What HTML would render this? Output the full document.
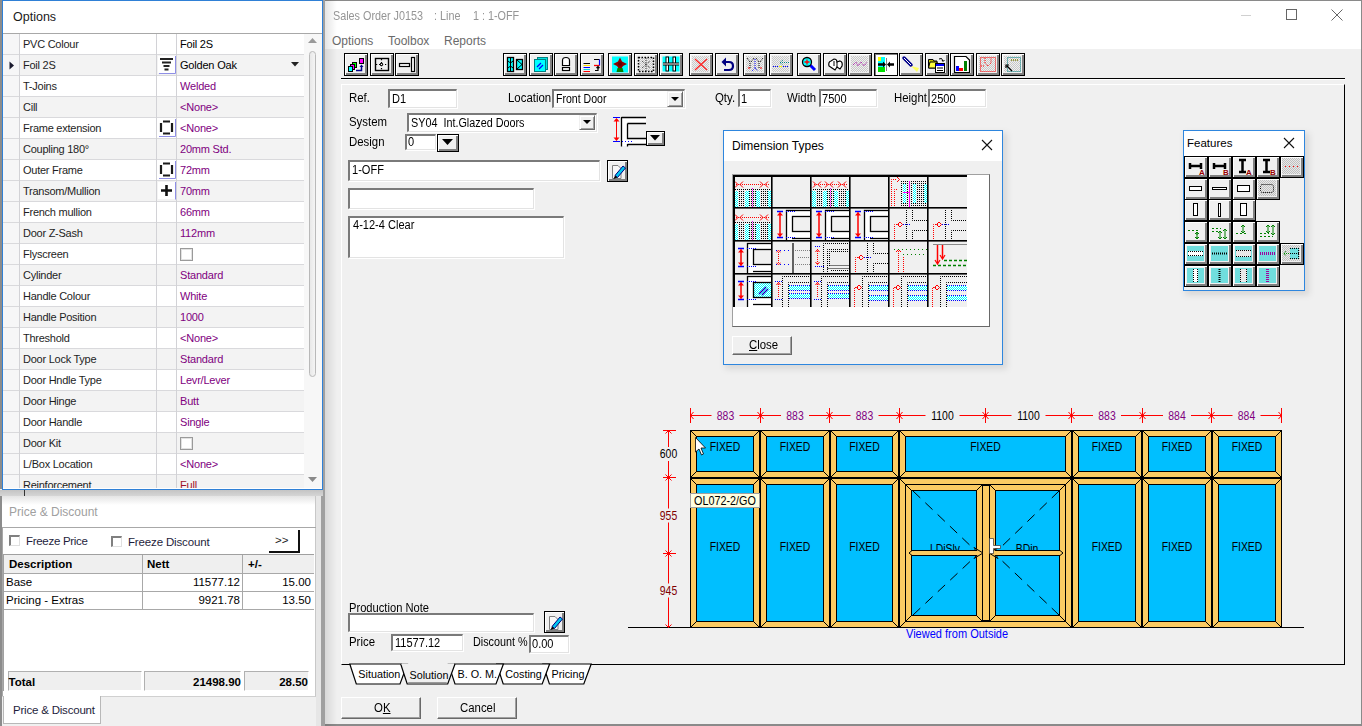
<!DOCTYPE html>
<html><head><meta charset="utf-8">
<style>
*{margin:0;padding:0;box-sizing:border-box}
html,body{width:1362px;height:726px;overflow:hidden;background:#f0f0f0;font-family:"Liberation Sans",sans-serif;font-size:11px;color:#000}
.a{position:absolute}
.t{position:absolute;white-space:nowrap;line-height:1}
.fld{position:absolute;background:#fff;border-top:2px solid #7a7a7a;border-left:2px solid #7a7a7a;border-bottom:1px solid #e3e3e3;border-right:1px solid #e3e3e3;box-shadow:1px 1px 0 #fff}
.ms{font-size:11.5px}
.tb{position:absolute;top:53px;width:24px;height:23px;border:1px solid #000;background:#f0f0f0;box-shadow:inset 1px 1px #fff,inset -2px -2px #808080}
.fb{position:absolute;width:24px;height:22px;border:1px solid #000;background:#f0f0f0;box-shadow:inset 1px 1px #fff,inset -2px -2px #808080}
.btn{position:absolute;background:#f0f0f0;border:1px solid;border-color:#fff #696969 #696969 #fff;box-shadow:inset -1px -1px #a0a0a0}
.dd{position:absolute;background:#f0f0f0;border:1px solid;border-color:#f0f0f0 #696969 #696969 #f0f0f0;box-shadow:inset 1px 1px #fff,inset -1px -1px #a0a0a0}
.arr{position:absolute;width:0;height:0;border-left:4px solid transparent;border-right:4px solid transparent;border-top:4px solid #000}
</style></head><body>
<div class="a" style="left:323px;top:0;width:1039px;height:726px;background:#f0f0f0"></div>
<div class="a" style="left:323px;top:0;width:1039px;height:49px;background:#fff"></div>
<div class="a" style="left:323px;top:0;width:1039px;height:1px;background:#8a8a8a"></div>
<div class="a" style="left:1361px;top:0;width:1px;height:726px;background:#8a8a8a"></div>
<div class="a" style="left:323px;top:724px;width:1039px;height:2px;background:#8a8a8a"></div>
<div class="a" style="left:323px;top:0;width:2px;height:726px;background:#a0a0a0"></div>
<div class="a" style="left:325px;top:0;width:12px;height:726px;background:linear-gradient(90deg,rgba(0,0,0,0.10),rgba(0,0,0,0))"></div>
<div class="t" style="left:333px;top:10px;font-size:12px;color:#959595;transform:scaleX(0.9);transform-origin:0 0">Sales Order J0153</div>
<div class="t" style="left:434px;top:10px;font-size:12px;color:#959595;transform:scaleX(0.9);transform-origin:0 0">: Line</div>
<div class="t" style="left:472.5px;top:10px;font-size:12px;color:#959595;transform:scaleX(0.9);transform-origin:0 0">1 : 1-OFF</div>
<div class="t" style="left:332px;top:35px;font-size:12px;color:#6a6a6a">Options</div>
<div class="t" style="left:388px;top:35px;font-size:12px;color:#6a6a6a">Toolbox</div>
<div class="t" style="left:444px;top:35px;font-size:12px;color:#6a6a6a">Reports</div>
<div class="a" style="left:1241px;top:15px;width:10px;height:1px;background:#d0d0d0"></div>
<div class="a" style="left:1286px;top:9px;width:11px;height:11px;border:1px solid #666"></div>
<svg class="a" style="left:1331px;top:9px" width="12" height="12"><path d="M0.5 0.5L11.5 11.5M11.5 0.5L0.5 11.5" stroke="#666" stroke-width="1"/></svg>
<div class="a" style="left:341px;top:78px;width:1004px;height:1px;background:#000"></div>
<div class="a" style="left:341px;top:79px;width:1004px;height:1px;background:#fff"></div>
<div class="a" style="left:341px;top:84px;width:1004px;height:581px;border-top:1px solid #fff;border-left:1px solid #fff;border-right:1px solid #000;border-bottom:1px solid #000"></div>
<div class="t" style="left:348.5px;top:92.34px;font-size:12px;color:#000;transform:scaleX(0.95);transform-origin:0 0">Ref.</div>
<div class="fld" style="left:388px;top:89px;width:69px;height:19px"></div><div class="t" style="left:392px;top:92.84px;font-size:12px;color:#000;transform:scaleX(0.92);transform-origin:0 0">D1</div>
<div class="t" style="left:507.5px;top:92.34px;font-size:12px;color:#000;transform:scaleX(0.95);transform-origin:0 0">Location</div>
<div class="fld" style="left:552px;top:89px;width:133px;height:19px"></div><div class="t" style="left:555.5px;top:92.84px;font-size:12px;color:#000;transform:scaleX(0.88);transform-origin:0 0">Front Door</div>
<div class="dd" style="left:667px;top:91px;width:16px;height:16px"></div><div class="arr" style="left:671px;top:97px"></div>
<div class="t" style="left:715px;top:92.34px;font-size:12px;color:#000;transform:scaleX(0.95);transform-origin:0 0">Qty.</div>
<div class="fld" style="left:738px;top:89px;width:33px;height:18px"></div><div class="t" style="left:741px;top:92.84px;font-size:12px;color:#000;transform:scaleX(0.92);transform-origin:0 0">1</div>
<div class="t" style="left:787px;top:92.34px;font-size:12px;color:#000;transform:scaleX(0.95);transform-origin:0 0">Width</div>
<div class="fld" style="left:819px;top:89px;width:58px;height:18px"></div><div class="t" style="left:822px;top:92.84px;font-size:12px;color:#000;transform:scaleX(0.92);transform-origin:0 0">7500</div>
<div class="t" style="left:894px;top:92.34px;font-size:12px;color:#000;transform:scaleX(0.95);transform-origin:0 0">Height</div>
<div class="fld" style="left:928px;top:89px;width:58px;height:18px"></div><div class="t" style="left:931px;top:92.84px;font-size:12px;color:#000;transform:scaleX(0.92);transform-origin:0 0">2500</div>
<div class="t" style="left:348.5px;top:116.34px;font-size:12px;color:#000;transform:scaleX(0.95);transform-origin:0 0">System</div>
<div class="fld" style="left:407px;top:113px;width:190px;height:19px"></div><div class="t" style="left:411px;top:116.84px;font-size:12px;color:#000;transform:scaleX(0.9);transform-origin:0 0">SY04&nbsp; Int.Glazed Doors</div>
<div class="dd" style="left:579px;top:115px;width:16px;height:15px"></div><div class="arr" style="left:583px;top:120px"></div>
<div class="t" style="left:348.5px;top:136.34px;font-size:12px;color:#000;transform:scaleX(0.95);transform-origin:0 0">Design</div>
<div class="fld" style="left:405px;top:134px;width:31px;height:16px"></div><div class="t" style="left:408px;top:135.84px;font-size:12px;color:#000;transform:scaleX(0.92);transform-origin:0 0">0</div>
<div class="a" style="left:437px;top:134px;width:22px;height:18px;border:1px solid #000;background:#f0f0f0;box-shadow:inset 1px 1px #fff,inset -2px -2px #808080"></div>
<svg class="a" style="left:442px;top:139px" width="12" height="7"><path d="M0 0H11L5.5 6Z" fill="#000"/></svg>
<svg class="a" style="left:611px;top:115px" width="56" height="33"><path d="M11 3H35V31H11Z" fill="#fff"/><path d="M17 9H35V23H17Z" fill="#f0f0f0"/><path d="M2 2.5H9M2 26.5H9" stroke="#0000ff" stroke-width="1.2"/><path d="M5.5 5V24" stroke="#ff0000" stroke-width="1"/><path d="M2.5 6.5L5.5 3L8.5 6.5ZM2.5 22.5L5.5 26L8.5 22.5Z" fill="#ff0000"/><path d="M10.5 2V31.5M10.5 2.5H35M16.5 8.5V23.5H35M16.5 8.5H35M16.5 29.5H35M16.5 29V31.5" stroke="#000" fill="none" stroke-width="1.3"/><path d="M11 26.5H22" stroke="#0000ff" stroke-width="1.2" stroke-dasharray="1 2"/></svg>
<div class="a" style="left:646px;top:131px;width:19px;height:15px;border:1px solid #000;background:#f0f0f0;box-shadow:inset 1px 1px #fff,inset -2px -2px #808080"></div>
<svg class="a" style="left:650px;top:135px" width="11" height="6"><path d="M0 0H10L5 5.5Z" fill="#000"/></svg>
<div class="fld" style="left:348px;top:160px;width:252px;height:21px"></div><div class="t" style="left:351.5px;top:163.84px;font-size:12px;color:#000;transform:scaleX(0.92);transform-origin:0 0">1-OFF</div>
<div class="a" style="left:607px;top:160px;width:21px;height:22px;border:1px solid #000;background:#f0f0f0;box-shadow:inset 1px 1px #fff,inset -2px -2px #808080"></div><svg class="a" style="left:608px;top:161px" width="19" height="19"><path d="M4.5 4.5H10L13 7.5V17.5H4.5Z" fill="#f8f8f8" stroke="#808080" stroke-width="1"/><path d="M7 14.5L15 5L17.5 7L9.5 16.5Z" fill="#00c8f0" stroke="#000080" stroke-width="1"/><path d="M7 14.5L5.5 18L9.5 16.5Z" fill="#000"/></svg>
<div class="fld" style="left:348px;top:188px;width:186px;height:21px"></div>
<div class="fld" style="left:348px;top:216px;width:216px;height:42px"></div><div class="t" style="left:352.5px;top:218.84px;font-size:12px;color:#000;transform:scaleX(0.92);transform-origin:0 0">4-12-4 Clear</div>
<div class="t" style="left:348.5px;top:601.84px;font-size:12px;color:#000;transform:scaleX(0.93);transform-origin:0 0">Production Note</div>
<div class="fld" style="left:348px;top:613px;width:186px;height:19px"></div>
<div class="a" style="left:544px;top:611px;width:21px;height:22px;border:1px solid #000;background:#f0f0f0;box-shadow:inset 1px 1px #fff,inset -2px -2px #808080"></div><svg class="a" style="left:545px;top:612px" width="19" height="19"><path d="M4.5 4.5H10L13 7.5V17.5H4.5Z" fill="#f8f8f8" stroke="#808080" stroke-width="1"/><path d="M7 14.5L15 5L17.5 7L9.5 16.5Z" fill="#00c8f0" stroke="#000080" stroke-width="1"/><path d="M7 14.5L5.5 18L9.5 16.5Z" fill="#000"/></svg>
<div class="t" style="left:348.5px;top:636.34px;font-size:12px;color:#000;transform:scaleX(0.95);transform-origin:0 0">Price</div>
<div class="fld" style="left:391px;top:634px;width:72px;height:17px"></div><div class="t" style="left:395px;top:636.84px;font-size:12px;color:#000;transform:scaleX(0.92);transform-origin:0 0">11577.12</div>
<div class="t" style="left:472.5px;top:636.34px;font-size:12px;color:#000;transform:scaleX(0.9);transform-origin:0 0">Discount %</div>
<div class="fld" style="left:529px;top:635px;width:40px;height:18px"></div><div class="t" style="left:532px;top:637.84px;font-size:12px;color:#000;transform:scaleX(0.92);transform-origin:0 0">0.00</div>
<svg class="a" style="left:0;top:0" width="700" height="726">
<path d="M542.9 664L549.4 684H583.8L591.2 664Z" fill="#fff" stroke="#000" stroke-width="1.2"/>
<text x="551.5" y="677.8" font-family="Liberation Sans" font-size="10.8" fill="#000">Pricing</text>
<path d="M496.7 664L503.2 684H542.2L549.6 664Z" fill="#fff" stroke="#000" stroke-width="1.2"/>
<text x="505.2" y="677.8" font-family="Liberation Sans" font-size="10.8" fill="#000">Costing</text>
<path d="M448.4 664L455 684H496L503.4 664Z" fill="#fff" stroke="#000" stroke-width="1.2"/>
<text x="457.5" y="677.8" font-family="Liberation Sans" font-size="10.8" fill="#000">B. O. M.</text>
<path d="M349.8 664L356.3 684H400L407.4 664Z" fill="#fff" stroke="#000" stroke-width="1.2"/>
<text x="358.3" y="677.8" font-family="Liberation Sans" font-size="10.8" fill="#000">Situation</text>
<path d="M400.7 664L407.2 684H447.7L455 664Z" fill="#f0f0f0" stroke="none"/>
<path d="M400.7 664L407.2 684H447.7L455 664" fill="none" stroke="#000" stroke-width="1.2"/>
<path d="M408.2 682.7H446.7" stroke="#9a9a9a" stroke-width="1.2"/>
<rect x="401.7" y="663.4" width="52.30000000000001" height="1.5" fill="#f0f0f0"/>
<text x="409.5" y="678.8" font-family="Liberation Sans" font-size="10.8" fill="#000">Solution</text>
</svg>
<div class="btn" style="left:341px;top:697px;width:80px;height:22px"></div>
<div class="t" style="left:373.5px;top:701.84px;font-size:12px;color:#000;transform:scaleX(0.95);transform-origin:0 0">O<u>K</u></div>
<div class="btn" style="left:437px;top:697px;width:80px;height:22px"></div>
<div class="t" style="left:460px;top:701.84px;font-size:12px;color:#000;transform:scaleX(0.95);transform-origin:0 0">Cancel</div>
<div class="a" style="left:0;top:0;width:2px;height:489px;background:#8c8c8c"></div>
<div class="a" style="left:2px;top:0;width:321px;height:490px;background:#fff;border:1px solid #2f80d6"></div>
<div class="t" style="left:13px;top:11px;font-size:12.5px;color:#1a1a1a">Options</div>
<div class="a" style="left:3px;top:33px;width:319px;height:1px;background:#a8a8a8"></div>
<div class="a" style="left:3px;top:34px;width:301px;height:20px;background:#fff;overflow:hidden">
<div class="a" style="left:0;top:0;width:16px;height:21px;background:#f6f6f7"></div>
<div class="t" style="left:20px;top:5px;color:#1e1e1e;letter-spacing:-0.25px">PVC Colour</div>
<div class="t" style="left:177px;top:5px;color:#000;letter-spacing:-0.2px">Foil 2S</div>
</div>
<div class="a" style="left:3px;top:54px;width:301px;height:1px;background:#d9d9dc"></div>
<div class="a" style="left:3px;top:55px;width:301px;height:20px;background:#f3f3f3;overflow:hidden">
<div class="a" style="left:0;top:0;width:16px;height:21px;background:#f6f6f7"></div>
<div class="t" style="left:20px;top:5px;color:#1e1e1e;letter-spacing:-0.25px">Foil 2S</div>
<div class="t" style="left:177px;top:5px;color:#000;letter-spacing:-0.2px">Golden Oak</div>
</div>
<div class="a" style="left:3px;top:75px;width:301px;height:1px;background:#d9d9dc"></div>
<svg class="a" style="left:158px;top:55px" width="19" height="19"><rect x="0" y="1" width="17" height="17" fill="#fff"/><rect x="2" y="3" width="13" height="2" fill="#222"/><rect x="4" y="6.5" width="9" height="2" fill="#222"/><rect x="5.5" y="10" width="6" height="2" fill="#222"/><rect x="6.5" y="13.5" width="4" height="2" fill="#222"/><path d="M17.5 1V18.5H1" stroke="#8f8fe6" fill="none" stroke-width="1"/></svg>
<div class="a" style="left:3px;top:76px;width:301px;height:20px;background:#fff;overflow:hidden">
<div class="a" style="left:0;top:0;width:16px;height:21px;background:#f6f6f7"></div>
<div class="t" style="left:20px;top:5px;color:#1e1e1e;letter-spacing:-0.25px">T-Joins</div>
<div class="t" style="left:177px;top:5px;color:#800080;letter-spacing:-0.2px">Welded</div>
</div>
<div class="a" style="left:3px;top:96px;width:301px;height:1px;background:#d9d9dc"></div>
<div class="a" style="left:3px;top:97px;width:301px;height:20px;background:#f3f3f3;overflow:hidden">
<div class="a" style="left:0;top:0;width:16px;height:21px;background:#f6f6f7"></div>
<div class="t" style="left:20px;top:5px;color:#1e1e1e;letter-spacing:-0.25px">Cill</div>
<div class="t" style="left:177px;top:5px;color:#800080;letter-spacing:-0.2px">&lt;None&gt;</div>
</div>
<div class="a" style="left:3px;top:117px;width:301px;height:1px;background:#d9d9dc"></div>
<div class="a" style="left:3px;top:118px;width:301px;height:20px;background:#fff;overflow:hidden">
<div class="a" style="left:0;top:0;width:16px;height:21px;background:#f6f6f7"></div>
<div class="t" style="left:20px;top:5px;color:#1e1e1e;letter-spacing:-0.25px">Frame extension</div>
<div class="t" style="left:177px;top:5px;color:#800080;letter-spacing:-0.2px">&lt;None&gt;</div>
</div>
<div class="a" style="left:3px;top:138px;width:301px;height:1px;background:#d9d9dc"></div>
<svg class="a" style="left:158px;top:118px" width="19" height="19"><rect x="0" y="1" width="17" height="17" fill="#fff"/><path d="M3 5V14M14 5V14" stroke="#1a1a1a" stroke-width="2.2"/><path d="M5 3.5H12M5 15.5H12" stroke="#1a1a1a" stroke-width="2"/><path d="M17.5 1V18.5H1" stroke="#8f8fe6" fill="none" stroke-width="1"/></svg>
<div class="a" style="left:3px;top:139px;width:301px;height:20px;background:#f3f3f3;overflow:hidden">
<div class="a" style="left:0;top:0;width:16px;height:21px;background:#f6f6f7"></div>
<div class="t" style="left:20px;top:5px;color:#1e1e1e;letter-spacing:-0.25px">Coupling 180°</div>
<div class="t" style="left:177px;top:5px;color:#800080;letter-spacing:-0.2px">20mm Std.</div>
</div>
<div class="a" style="left:3px;top:159px;width:301px;height:1px;background:#d9d9dc"></div>
<div class="a" style="left:3px;top:160px;width:301px;height:20px;background:#fff;overflow:hidden">
<div class="a" style="left:0;top:0;width:16px;height:21px;background:#f6f6f7"></div>
<div class="t" style="left:20px;top:5px;color:#1e1e1e;letter-spacing:-0.25px">Outer Frame</div>
<div class="t" style="left:177px;top:5px;color:#800080;letter-spacing:-0.2px">72mm</div>
</div>
<div class="a" style="left:3px;top:180px;width:301px;height:1px;background:#d9d9dc"></div>
<svg class="a" style="left:158px;top:160px" width="19" height="19"><rect x="0" y="1" width="17" height="17" fill="#fff"/><path d="M3 5V14M14 5V14" stroke="#1a1a1a" stroke-width="2.2"/><path d="M5 3.5H12M5 15.5H12" stroke="#1a1a1a" stroke-width="2"/><path d="M17.5 1V18.5H1" stroke="#8f8fe6" fill="none" stroke-width="1"/></svg>
<div class="a" style="left:3px;top:181px;width:301px;height:20px;background:#f3f3f3;overflow:hidden">
<div class="a" style="left:0;top:0;width:16px;height:21px;background:#f6f6f7"></div>
<div class="t" style="left:20px;top:5px;color:#1e1e1e;letter-spacing:-0.25px">Transom/Mullion</div>
<div class="t" style="left:177px;top:5px;color:#800080;letter-spacing:-0.2px">70mm</div>
</div>
<div class="a" style="left:3px;top:201px;width:301px;height:1px;background:#d9d9dc"></div>
<svg class="a" style="left:158px;top:181px" width="19" height="19"><rect x="0" y="1" width="17" height="17" fill="#fff"/><path d="M8.5 4V15M3 9.5H14" stroke="#111" stroke-width="2.6"/><path d="M17.5 1V18.5" stroke="#8f8fe6" fill="none" stroke-width="1"/></svg>
<div class="a" style="left:3px;top:202px;width:301px;height:20px;background:#fff;overflow:hidden">
<div class="a" style="left:0;top:0;width:16px;height:21px;background:#f6f6f7"></div>
<div class="t" style="left:20px;top:5px;color:#1e1e1e;letter-spacing:-0.25px">French mullion</div>
<div class="t" style="left:177px;top:5px;color:#800080;letter-spacing:-0.2px">66mm</div>
</div>
<div class="a" style="left:3px;top:222px;width:301px;height:1px;background:#d9d9dc"></div>
<div class="a" style="left:3px;top:223px;width:301px;height:20px;background:#f3f3f3;overflow:hidden">
<div class="a" style="left:0;top:0;width:16px;height:21px;background:#f6f6f7"></div>
<div class="t" style="left:20px;top:5px;color:#1e1e1e;letter-spacing:-0.25px">Door Z-Sash</div>
<div class="t" style="left:177px;top:5px;color:#800080;letter-spacing:-0.2px">112mm</div>
</div>
<div class="a" style="left:3px;top:243px;width:301px;height:1px;background:#d9d9dc"></div>
<div class="a" style="left:3px;top:244px;width:301px;height:20px;background:#fff;overflow:hidden">
<div class="a" style="left:0;top:0;width:16px;height:21px;background:#f6f6f7"></div>
<div class="t" style="left:20px;top:5px;color:#1e1e1e;letter-spacing:-0.25px">Flyscreen</div>
<div class="a" style="left:177px;top:4px;width:13px;height:13px;border:1px solid #9a9a9a;background:#fff;box-shadow:inset 0 0 0 1px #e2e2e2"></div>
</div>
<div class="a" style="left:3px;top:264px;width:301px;height:1px;background:#d9d9dc"></div>
<div class="a" style="left:3px;top:265px;width:301px;height:20px;background:#f3f3f3;overflow:hidden">
<div class="a" style="left:0;top:0;width:16px;height:21px;background:#f6f6f7"></div>
<div class="t" style="left:20px;top:5px;color:#1e1e1e;letter-spacing:-0.25px">Cylinder</div>
<div class="t" style="left:177px;top:5px;color:#800080;letter-spacing:-0.2px">Standard</div>
</div>
<div class="a" style="left:3px;top:285px;width:301px;height:1px;background:#d9d9dc"></div>
<div class="a" style="left:3px;top:286px;width:301px;height:20px;background:#fff;overflow:hidden">
<div class="a" style="left:0;top:0;width:16px;height:21px;background:#f6f6f7"></div>
<div class="t" style="left:20px;top:5px;color:#1e1e1e;letter-spacing:-0.25px">Handle Colour</div>
<div class="t" style="left:177px;top:5px;color:#800080;letter-spacing:-0.2px">White</div>
</div>
<div class="a" style="left:3px;top:306px;width:301px;height:1px;background:#d9d9dc"></div>
<div class="a" style="left:3px;top:307px;width:301px;height:20px;background:#f3f3f3;overflow:hidden">
<div class="a" style="left:0;top:0;width:16px;height:21px;background:#f6f6f7"></div>
<div class="t" style="left:20px;top:5px;color:#1e1e1e;letter-spacing:-0.25px">Handle Position</div>
<div class="t" style="left:177px;top:5px;color:#800080;letter-spacing:-0.2px">1000</div>
</div>
<div class="a" style="left:3px;top:327px;width:301px;height:1px;background:#d9d9dc"></div>
<div class="a" style="left:3px;top:328px;width:301px;height:20px;background:#fff;overflow:hidden">
<div class="a" style="left:0;top:0;width:16px;height:21px;background:#f6f6f7"></div>
<div class="t" style="left:20px;top:5px;color:#1e1e1e;letter-spacing:-0.25px">Threshold</div>
<div class="t" style="left:177px;top:5px;color:#800080;letter-spacing:-0.2px">&lt;None&gt;</div>
</div>
<div class="a" style="left:3px;top:348px;width:301px;height:1px;background:#d9d9dc"></div>
<div class="a" style="left:3px;top:349px;width:301px;height:20px;background:#f3f3f3;overflow:hidden">
<div class="a" style="left:0;top:0;width:16px;height:21px;background:#f6f6f7"></div>
<div class="t" style="left:20px;top:5px;color:#1e1e1e;letter-spacing:-0.25px">Door Lock Type</div>
<div class="t" style="left:177px;top:5px;color:#800080;letter-spacing:-0.2px">Standard</div>
</div>
<div class="a" style="left:3px;top:369px;width:301px;height:1px;background:#d9d9dc"></div>
<div class="a" style="left:3px;top:370px;width:301px;height:20px;background:#fff;overflow:hidden">
<div class="a" style="left:0;top:0;width:16px;height:21px;background:#f6f6f7"></div>
<div class="t" style="left:20px;top:5px;color:#1e1e1e;letter-spacing:-0.25px">Door Hndle Type</div>
<div class="t" style="left:177px;top:5px;color:#800080;letter-spacing:-0.2px">Levr/Lever</div>
</div>
<div class="a" style="left:3px;top:390px;width:301px;height:1px;background:#d9d9dc"></div>
<div class="a" style="left:3px;top:391px;width:301px;height:20px;background:#f3f3f3;overflow:hidden">
<div class="a" style="left:0;top:0;width:16px;height:21px;background:#f6f6f7"></div>
<div class="t" style="left:20px;top:5px;color:#1e1e1e;letter-spacing:-0.25px">Door Hinge</div>
<div class="t" style="left:177px;top:5px;color:#800080;letter-spacing:-0.2px">Butt</div>
</div>
<div class="a" style="left:3px;top:411px;width:301px;height:1px;background:#d9d9dc"></div>
<div class="a" style="left:3px;top:412px;width:301px;height:20px;background:#fff;overflow:hidden">
<div class="a" style="left:0;top:0;width:16px;height:21px;background:#f6f6f7"></div>
<div class="t" style="left:20px;top:5px;color:#1e1e1e;letter-spacing:-0.25px">Door Handle</div>
<div class="t" style="left:177px;top:5px;color:#800080;letter-spacing:-0.2px">Single</div>
</div>
<div class="a" style="left:3px;top:432px;width:301px;height:1px;background:#d9d9dc"></div>
<div class="a" style="left:3px;top:433px;width:301px;height:20px;background:#f3f3f3;overflow:hidden">
<div class="a" style="left:0;top:0;width:16px;height:21px;background:#f6f6f7"></div>
<div class="t" style="left:20px;top:5px;color:#1e1e1e;letter-spacing:-0.25px">Door Kit</div>
<div class="a" style="left:177px;top:4px;width:13px;height:13px;border:1px solid #9a9a9a;background:#fff;box-shadow:inset 0 0 0 1px #e2e2e2"></div>
</div>
<div class="a" style="left:3px;top:453px;width:301px;height:1px;background:#d9d9dc"></div>
<div class="a" style="left:3px;top:454px;width:301px;height:20px;background:#fff;overflow:hidden">
<div class="a" style="left:0;top:0;width:16px;height:21px;background:#f6f6f7"></div>
<div class="t" style="left:20px;top:5px;color:#1e1e1e;letter-spacing:-0.25px">L/Box Location</div>
<div class="t" style="left:177px;top:5px;color:#800080;letter-spacing:-0.2px">&lt;None&gt;</div>
</div>
<div class="a" style="left:3px;top:474px;width:301px;height:1px;background:#d9d9dc"></div>
<div class="a" style="left:3px;top:475px;width:301px;height:13px;background:#f3f3f3;overflow:hidden">
<div class="a" style="left:0;top:0;width:16px;height:21px;background:#f6f6f7"></div>
<div class="t" style="left:20px;top:5px;color:#1e1e1e;letter-spacing:-0.25px">Reinforcement</div>
<div class="t" style="left:177px;top:5px;color:#a0142a;letter-spacing:-0.2px">Full</div>
</div>
<div class="a" style="left:19px;top:34px;width:1px;height:454px;background:#d2d2d6"></div>
<div class="a" style="left:156px;top:34px;width:1px;height:454px;background:#d2d2d6"></div>
<div class="a" style="left:176px;top:34px;width:1px;height:454px;background:#d2d2d6"></div>
<svg class="a" style="left:9px;top:61px" width="6" height="9"><path d="M0.5 0.5L5 4.5L0.5 8.5Z" fill="#1a1a2e"/></svg>
<svg class="a" style="left:291px;top:62px" width="9" height="6"><path d="M0 0H8L4 4.5Z" fill="#222"/></svg>
<div class="a" style="left:304px;top:34px;width:18px;height:454px;background:#f7f7f7"></div>
<svg class="a" style="left:308px;top:38px" width="9" height="6"><path d="M0 5H9L4.5 0Z" fill="#9a9a9a"/></svg>
<div class="a" style="left:309px;top:51px;width:7px;height:326px;border:1px solid #b9b9b9;border-radius:4px;background:linear-gradient(90deg,#e8e8e8,#f4f4f4)"></div>
<svg class="a" style="left:308px;top:477px" width="9" height="6"><path d="M0 0H9L4.5 5Z" fill="#8a8a8a"/></svg>
<div class="a" style="left:0;top:490px;width:323px;height:7px;background:linear-gradient(#c4c4c4,#d8d8d8)"></div>
<div class="a" style="left:24px;top:490px;width:1px;height:7px;background:#333"></div>
<div class="a" style="left:0;top:496px;width:323px;height:230px;background:#f0f0f0"></div>
<div class="a" style="left:0;top:496px;width:2px;height:230px;background:#8c8c8c"></div>
<div class="a" style="left:2px;top:496px;width:314px;height:201px;background:linear-gradient(#e4e4e4,#fff 9px,#fff);border-right:1px solid #c8c8c8;border-bottom:1px solid #d0d0d0"></div>
<div class="t" style="left:9px;top:506px;font-size:12px;color:#a0a0a0">Price &amp; Discount</div>
<div class="a" style="left:2px;top:527px;width:314px;height:1px;background:#a8a8a8"></div>
<div class="a" style="left:2px;top:528px;width:1px;height:168px;background:#a8a8a8"></div>
<div class="a" style="left:9px;top:535px;width:11px;height:11px;border-top:2px solid #808080;border-left:2px solid #808080;border-right:1px solid #e0e0e0;border-bottom:1px solid #e0e0e0;background:#fff"></div>
<div class="t" style="left:26px;top:536px;font-size:11.5px;color:#1e1e3c;letter-spacing:-0.3px">Freeze Price</div>
<div class="a" style="left:111px;top:536px;width:11px;height:11px;border-top:2px solid #808080;border-left:2px solid #808080;border-right:1px solid #e0e0e0;border-bottom:1px solid #e0e0e0;background:#fff"></div>
<div class="t" style="left:128px;top:537px;font-size:11.5px;color:#1e1e3c;letter-spacing:-0.15px">Freeze Discount</div>
<div class="a" style="left:269px;top:530px;width:31px;height:23px;border-right:2px solid #111;border-bottom:2px solid #111"></div>
<div class="t" style="left:275px;top:535px;font-size:11.5px;color:#222">&gt;&gt;</div>
<div class="a" style="left:3px;top:554px;width:311px;height:137px;border-top:1px solid #a0a0a0;border-left:1px solid #a0a0a0"></div>
<div class="a" style="left:4px;top:555px;width:310px;height:18px;background:#efefef"></div>
<div class="a" style="left:4px;top:573px;width:310px;height:1px;background:#a8a8a8"></div>
<div class="a" style="left:4px;top:591px;width:310px;height:1px;background:#a8a8a8"></div>
<div class="a" style="left:4px;top:609px;width:310px;height:1px;background:#a8a8a8"></div>
<div class="a" style="left:142px;top:555px;width:1px;height:54px;background:#a8a8a8"></div>
<div class="a" style="left:242px;top:555px;width:1px;height:54px;background:#a8a8a8"></div>
<div class="t" style="left:9px;top:559px;font-weight:bold;font-size:11.5px">Description</div>
<div class="t" style="left:147px;top:559px;font-weight:bold;font-size:11.5px">Nett</div>
<div class="t" style="left:248px;top:559px;font-weight:bold;font-size:11.5px">+/-</div>
<div class="t" style="left:6px;top:577px;font-size:11.5px">Base</div>
<div class="t" style="left:6px;top:595px;font-size:11.5px">Pricing - Extras</div>
<div class="t" style="left:140px;width:100px;text-align:right;top:577px;font-size:11.5px">11577.12</div>
<div class="t" style="left:140px;width:100px;text-align:right;top:595px;font-size:11.5px">9921.78</div>
<div class="t" style="left:240px;width:71px;text-align:right;top:577px;font-size:11.5px">15.00</div>
<div class="t" style="left:240px;width:71px;text-align:right;top:595px;font-size:11.5px">13.50</div>
<div class="a" style="left:8px;top:671px;width:134px;height:20px;background:#efefef;border-top:1px solid #b0b0b0;border-left:1px solid #b0b0b0;border-right:1px solid #fff;border-bottom:1px solid #fff"></div>
<div class="a" style="left:144px;top:671px;width:97px;height:20px;background:#efefef;border-top:1px solid #b0b0b0;border-left:1px solid #b0b0b0;border-right:1px solid #fff;border-bottom:1px solid #fff"></div>
<div class="a" style="left:244px;top:671px;width:65px;height:20px;background:#efefef;border-top:1px solid #b0b0b0;border-left:1px solid #b0b0b0;border-right:1px solid #fff;border-bottom:1px solid #fff"></div>
<div class="t" style="left:8.5px;top:676.5px;font-weight:bold;font-size:11.5px">Total</div>
<div class="t" style="left:140px;width:101px;text-align:right;top:676.5px;font-weight:bold;font-size:11.5px">21498.90</div>
<div class="t" style="left:240px;width:68px;text-align:right;top:676.5px;font-weight:bold;font-size:11.5px">28.50</div>
<div class="a" style="left:3px;top:696px;width:98px;height:28px;background:#fff;border:1px solid #b8b8b8;border-top:none"></div>
<div class="t" style="left:13px;top:705px;font-size:11.5px;color:#1e1e3c;letter-spacing:-0.2px">Price &amp; Discount</div>
<div class="a" style="left:316px;top:496px;width:7px;height:230px;background:#e6e6e6"></div>
<div class="a" style="left:321px;top:496px;width:3px;height:230px;background:#a0a0a0"></div>
<svg width="0" height="0" style="position:absolute"><defs><pattern id="tchk" width="2" height="2" patternUnits="userSpaceOnUse"><rect width="2" height="2" fill="#f0f0f0"/><rect width="1" height="1" fill="#c8c8c8"/><rect x="1" y="1" width="1" height="1" fill="#c8c8c8"/></pattern></defs></svg>
<div class="tb" style="left:344px"></div>
<svg class="a" style="left:344px;top:53px" width="24" height="23"><rect x="8.5" y="9.5" width="4" height="5" fill="#00ff00" stroke="#000"/><rect x="6.5" y="11.5" width="4" height="5" fill="#ff00ff" stroke="#000"/><rect x="4.5" y="13.5" width="4" height="5" fill="#00ffff" stroke="#000"/><rect x="15.5" y="5.5" width="4" height="5" fill="#ff00ff" stroke="#000"/><path d="M12 17.5H17.5V13.5" stroke="#00008b" stroke-width="1.5" fill="none"/><path d="M15.5 14L17.5 11.5L19.5 14Z" fill="#00008b"/></svg>
<div class="tb" style="left:370px"></div>
<svg class="a" style="left:370px;top:53px" width="24" height="23"><rect x="5.5" y="5.5" width="13" height="12" fill="none" stroke="#000" stroke-width="1.4"/><path d="M11.5 6V17M6 11.5H18" stroke="#000" stroke-width="1.2" stroke-dasharray="1.2 1.8"/><rect x="10.5" y="10.5" width="2" height="2" fill="#fff" stroke="#000" stroke-width="0.8"/></svg>
<div class="tb" style="left:395px"></div>
<svg class="a" style="left:395px;top:53px" width="24" height="23"><rect x="4.5" y="10.5" width="10" height="3" fill="#fff" stroke="#000" stroke-width="1.2"/><rect x="16.5" y="4.5" width="3" height="14" fill="#fff" stroke="#000" stroke-width="1.2"/></svg>
<div class="tb" style="left:503px"></div>
<svg class="a" style="left:503px;top:53px" width="24" height="23"><rect x="4.5" y="4.5" width="6" height="14" fill="#00ffff" stroke="#000" stroke-width="1.3"/><path d="M7.5 5V18M5 8L7.5 10L10 8M5 15L7.5 13L10 15" stroke="#000" fill="none"/><rect x="13.5" y="6.5" width="6" height="10" fill="#00ffff" stroke="#000" stroke-width="1.3"/><path d="M14 7L19 11.5L14 16" stroke="#000" fill="none"/></svg>
<div class="tb" style="left:529px"></div>
<svg class="a" style="left:529px;top:53px" width="24" height="23"><rect x="8.5" y="4.5" width="10" height="12" fill="#00e0e0" stroke="#008080"/><rect x="5.5" y="6.5" width="11" height="12" fill="#00ffff" stroke="#008080"/><path d="M8 14L12 10M10 16L14 12" stroke="#0000ff" stroke-width="1.2"/></svg>
<div class="tb" style="left:554px"></div>
<svg class="a" style="left:554px;top:53px" width="24" height="23"><path d="M8.5 12.5V7.5Q8.5 4.5 12 4.5Q15.5 4.5 15.5 7.5V12.5Z" fill="#fff" stroke="#000" stroke-width="1.2"/><rect x="8.5" y="14.5" width="7" height="3" fill="#fff" stroke="#000" stroke-width="1.2"/></svg>
<div class="tb" style="left:580px"></div>
<svg class="a" style="left:580px;top:53px" width="24" height="23"><path d="M3.5 10.5H10" stroke="#000" stroke-width="1"/><path d="M3.5 12.5H10" stroke="#ffe000" stroke-width="1"/><path d="M3.5 14.5H10" stroke="#0000ff" stroke-width="1"/><path d="M3.5 16.5H10" stroke="#00d8d8" stroke-width="1"/><path d="M3.5 18.5H10" stroke="#ff0000" stroke-width="1"/><path d="M14 6.5H19.5" stroke="#000" fill="none"/><path d="M19.5 6.5V12.5" stroke="#0000ff" stroke-width="1.2"/><path d="M14 12.5H19.5" stroke="#ff0000" stroke-width="1.3"/><path d="M15 17.5H18V14.5M16.5 15L18 13.5L19.5 15" stroke="#000" fill="none" stroke-width="1.2"/></svg>
<div class="tb" style="left:608px"></div>
<svg class="a" style="left:608px;top:53px" width="24" height="23"><rect x="4" y="3.5" width="16" height="16" fill="#00ffff"/><path d="M12 4.5L14 8.5L19 11L15 13L13 16H11L9 13L5 11L10 8.5Z" fill="#8b0000"/><circle cx="12" cy="11" r="2" fill="#600000"/><path d="M9.5 15H14.5L15.5 19H8.5Z" fill="#008000"/></svg>
<div class="tb" style="left:634px"></div>
<svg class="a" style="left:634px;top:53px" width="24" height="23"><rect x="4" y="4" width="16" height="15" fill="url(#tchk)"/><rect x="4.5" y="4.5" width="15" height="14" fill="none" stroke="#000" stroke-width="1.5" stroke-dasharray="1.5 1.5"/><path d="M12 5V18M8 8L12 11.5L16 8M8 15L12 11.5L16 15" stroke="#333" stroke-dasharray="1 1" fill="none"/></svg>
<div class="tb" style="left:659px"></div>
<svg class="a" style="left:659px;top:53px" width="24" height="23"><rect x="3.5" y="3.5" width="17" height="15" fill="#00ffff"/><rect x="7" y="4" width="2.5" height="14" fill="#fff" stroke="#000"/><rect x="14" y="4" width="2.5" height="14" fill="#fff" stroke="#000"/><path d="M4 11H20" stroke="#000" stroke-width="3"/><path d="M4 11H20" stroke="#fff" stroke-width="1"/></svg>
<div class="tb" style="left:689px"></div>
<svg class="a" style="left:689px;top:53px" width="24" height="23"><rect x="3" y="3" width="17" height="16" fill="url(#tchk)"/><path d="M6 6L18 17M18 6L6 17" stroke="#ff2020" stroke-width="1.2"/></svg>
<div class="tb" style="left:715px"></div>
<svg class="a" style="left:715px;top:53px" width="24" height="23"><path d="M8 9H14Q18 9 18 13Q18 17 14 17H9" stroke="#000080" stroke-width="2.2" fill="none"/><path d="M11 4.5L6.5 9L11 13.5Z" fill="#000080"/></svg>
<div class="tb" style="left:743px"></div>
<svg class="a" style="left:743px;top:53px" width="24" height="23"><rect x="3" y="3" width="17" height="16" fill="url(#tchk)"/><path d="M4 5L7 9V15M11 5L8 9M13 5L16 9V15M20 5L17 9" stroke="#000" stroke-dasharray="1 1" fill="none"/><path d="M12 6V15L9 18M12 15L15 18" stroke="#0000ff" stroke-dasharray="1 1" fill="none"/><path d="M5 15H7M17 15H19" stroke="#f00"/></svg>
<div class="tb" style="left:769px"></div>
<svg class="a" style="left:769px;top:53px" width="24" height="23"><rect x="3" y="3" width="17" height="16" fill="url(#tchk)"/><path d="M4 13.5H20" stroke="#0000ff" stroke-dasharray="1 1"/><path d="M10 13.5H13" stroke="#ffff00"/><path d="M11 9.5H20M14 7L11 9.5L14 12" stroke="#008080" stroke-dasharray="1 1" fill="none"/></svg>
<div class="tb" style="left:797px"></div>
<svg class="a" style="left:797px;top:53px" width="24" height="23"><path d="M13 12L18 17" stroke="#0000ff" stroke-width="3"/><circle cx="10" cy="9" r="4.5" fill="#00ffff" stroke="#000" stroke-width="1.3"/><path d="M10 6.5V11.5M7.5 9H12.5" stroke="#ff0000" stroke-width="1.3"/></svg>
<div class="tb" style="left:823px"></div>
<svg class="a" style="left:823px;top:53px" width="24" height="23"><path d="M6 13Q5 9 8 8L11 6Q14 6 14 9L17 8Q20 9 19 13L17 16L14 14L12 17L9 15Z" fill="#fff" stroke="#000" stroke-width="1.2"/><path d="M11 8V13M14 9V14" stroke="#000"/></svg>
<div class="tb" style="left:848px"></div>
<svg class="a" style="left:848px;top:53px" width="24" height="23"><rect x="3" y="3" width="17" height="16" fill="url(#tchk)"/><path d="M5 12L8 9L10 13L13 9L16 13L19 9" stroke="#a000a0" stroke-dasharray="1 1" fill="none"/></svg>
<div class="tb" style="left:899px"></div>
<svg class="a" style="left:899px;top:53px" width="24" height="23"><path d="M5 5L12 12" stroke="#00008b" stroke-width="3.5" stroke-linecap="round"/><path d="M5 5L12 12" stroke="#fff" stroke-width="1"/><path d="M12 13L18 19L20 15Z" fill="#ffff60"/></svg>
<div class="tb" style="left:925px"></div>
<svg class="a" style="left:925px;top:53px" width="24" height="23"><path d="M3.5 6.5H8L9 8H12V15H3.5Z" fill="#c0c000" stroke="#000"/><path d="M5 9H12V15H3.5Z" fill="#ffff40" stroke="#000"/><rect x="10.5" y="10.5" width="9" height="9" fill="#fff" stroke="#000"/><rect x="11" y="11" width="8" height="2" fill="#0000ff"/><path d="M12 15H18M12 17.5H18" stroke="#000"/><path d="M14 6Q17 4 18 8M17 7L18 8.5L19.5 7" stroke="#000" fill="none"/></svg>
<div class="tb" style="left:950px"></div>
<svg class="a" style="left:950px;top:53px" width="24" height="23"><path d="M4.5 3.5H16L19.5 7V19.5H4.5Z" fill="#fff" stroke="#000" stroke-width="1.2"/><rect x="6" y="13" width="3" height="5" fill="#0000ff"/><rect x="9" y="15" width="4" height="3" fill="#ff0000"/><rect x="14" y="8" width="3" height="10" fill="#008000"/></svg>
<div class="tb" style="left:976px"></div>
<svg class="a" style="left:976px;top:53px" width="24" height="23"><rect x="3" y="3" width="17" height="16" fill="url(#tchk)"/><rect x="4.5" y="4.5" width="15" height="14" fill="none" stroke="#ff0000" stroke-dasharray="1 1"/><path d="M9 5V10L12 13L15 10V5M5 13H9" stroke="#f00" stroke-dasharray="1 1" fill="none"/></svg>
<div class="tb" style="left:1001px"></div>
<svg class="a" style="left:1001px;top:53px" width="24" height="23"><rect x="3" y="3" width="17" height="16" fill="url(#tchk)"/><rect x="6.5" y="4.5" width="13" height="14" fill="none" stroke="#008080" stroke-dasharray="1 1"/><path d="M10 7H17" stroke="#808000" stroke-width="1.5" stroke-dasharray="1 1"/><path d="M11 18L6 13M5 15V12H8" stroke="#000" stroke-width="1.2" fill="none"/></svg>
<div class="a" style="left:874px;top:53px;width:24px;height:23px;border:1px solid #000;background:#fff;box-shadow:inset 1px 1px #808080"></div>
<svg class="a" style="left:874px;top:53px" width="24" height="23"><rect x="4" y="4" width="3" height="4" fill="#ffff00"/><rect x="7" y="4" width="4" height="10" fill="#00ffff"/><rect x="4" y="8" width="3" height="6" fill="#00ffff"/><rect x="4" y="14" width="7" height="5" fill="#00e000"/><path d="M4 11.5H9" stroke="#000" stroke-width="2.5"/><path d="M9 8.5L12 11.5L9 14.5Z" fill="#000"/><path d="M15 11.5H20" stroke="#000" stroke-width="2.5"/><path d="M16 8.5L13 11.5L16 14.5Z" fill="#000"/><path d="M12.5 5V18" stroke="#808080"/></svg><svg class="a" style="left:0;top:0" width="1362" height="726">
<rect x="690.5" y="430.5" width="69" height="47" fill="#fbcb63" stroke="#000" stroke-width="1"/>
<rect x="696.5" y="436.5" width="57" height="35" fill="#00bfff" stroke="#000" stroke-width="1"/>
<path d="M690.5 430.5L696.5 436.5M759.5 430.5L753.5 436.5M690.5 477.5L696.5 471.5M759.5 477.5L753.5 471.5" stroke="#000" stroke-width="1"/>
<rect x="690.5" y="478.5" width="69" height="149" fill="#fbcb63" stroke="#000" stroke-width="1"/>
<rect x="696.5" y="484.5" width="57" height="137" fill="#00bfff" stroke="#000" stroke-width="1"/>
<path d="M690.5 478.5L696.5 484.5M759.5 478.5L753.5 484.5M690.5 627.5L696.5 621.5M759.5 627.5L753.5 621.5" stroke="#000" stroke-width="1"/>
<text x="725.0" y="451.5" font-family="Liberation Sans" font-size="12" fill="#000" text-anchor="middle" transform="translate(725.0 0) scale(0.87 1) translate(-725.0 0)">FIXED</text>
<text x="725.0" y="551.5" font-family="Liberation Sans" font-size="12" fill="#000" text-anchor="middle" transform="translate(725.0 0) scale(0.87 1) translate(-725.0 0)">FIXED</text>
<rect x="760.5" y="430.5" width="69" height="47" fill="#fbcb63" stroke="#000" stroke-width="1"/>
<rect x="766.5" y="436.5" width="57" height="35" fill="#00bfff" stroke="#000" stroke-width="1"/>
<path d="M760.5 430.5L766.5 436.5M829.5 430.5L823.5 436.5M760.5 477.5L766.5 471.5M829.5 477.5L823.5 471.5" stroke="#000" stroke-width="1"/>
<rect x="760.5" y="478.5" width="69" height="149" fill="#fbcb63" stroke="#000" stroke-width="1"/>
<rect x="766.5" y="484.5" width="57" height="137" fill="#00bfff" stroke="#000" stroke-width="1"/>
<path d="M760.5 478.5L766.5 484.5M829.5 478.5L823.5 484.5M760.5 627.5L766.5 621.5M829.5 627.5L823.5 621.5" stroke="#000" stroke-width="1"/>
<text x="795.0" y="451.5" font-family="Liberation Sans" font-size="12" fill="#000" text-anchor="middle" transform="translate(795.0 0) scale(0.87 1) translate(-795.0 0)">FIXED</text>
<text x="795.0" y="551.5" font-family="Liberation Sans" font-size="12" fill="#000" text-anchor="middle" transform="translate(795.0 0) scale(0.87 1) translate(-795.0 0)">FIXED</text>
<rect x="830.5" y="430.5" width="68" height="47" fill="#fbcb63" stroke="#000" stroke-width="1"/>
<rect x="836.5" y="436.5" width="56" height="35" fill="#00bfff" stroke="#000" stroke-width="1"/>
<path d="M830.5 430.5L836.5 436.5M898.5 430.5L892.5 436.5M830.5 477.5L836.5 471.5M898.5 477.5L892.5 471.5" stroke="#000" stroke-width="1"/>
<rect x="830.5" y="478.5" width="68" height="149" fill="#fbcb63" stroke="#000" stroke-width="1"/>
<rect x="836.5" y="484.5" width="56" height="137" fill="#00bfff" stroke="#000" stroke-width="1"/>
<path d="M830.5 478.5L836.5 484.5M898.5 478.5L892.5 484.5M830.5 627.5L836.5 621.5M898.5 627.5L892.5 621.5" stroke="#000" stroke-width="1"/>
<text x="864.5" y="451.5" font-family="Liberation Sans" font-size="12" fill="#000" text-anchor="middle" transform="translate(864.5 0) scale(0.87 1) translate(-864.5 0)">FIXED</text>
<text x="864.5" y="551.5" font-family="Liberation Sans" font-size="12" fill="#000" text-anchor="middle" transform="translate(864.5 0) scale(0.87 1) translate(-864.5 0)">FIXED</text>
<rect x="1072.5" y="430.5" width="69" height="47" fill="#fbcb63" stroke="#000" stroke-width="1"/>
<rect x="1078.5" y="436.5" width="57" height="35" fill="#00bfff" stroke="#000" stroke-width="1"/>
<path d="M1072.5 430.5L1078.5 436.5M1141.5 430.5L1135.5 436.5M1072.5 477.5L1078.5 471.5M1141.5 477.5L1135.5 471.5" stroke="#000" stroke-width="1"/>
<rect x="1072.5" y="478.5" width="69" height="149" fill="#fbcb63" stroke="#000" stroke-width="1"/>
<rect x="1078.5" y="484.5" width="57" height="137" fill="#00bfff" stroke="#000" stroke-width="1"/>
<path d="M1072.5 478.5L1078.5 484.5M1141.5 478.5L1135.5 484.5M1072.5 627.5L1078.5 621.5M1141.5 627.5L1135.5 621.5" stroke="#000" stroke-width="1"/>
<text x="1107.0" y="451.5" font-family="Liberation Sans" font-size="12" fill="#000" text-anchor="middle" transform="translate(1107.0 0) scale(0.87 1) translate(-1107.0 0)">FIXED</text>
<text x="1107.0" y="551.5" font-family="Liberation Sans" font-size="12" fill="#000" text-anchor="middle" transform="translate(1107.0 0) scale(0.87 1) translate(-1107.0 0)">FIXED</text>
<rect x="1142.5" y="430.5" width="69" height="47" fill="#fbcb63" stroke="#000" stroke-width="1"/>
<rect x="1148.5" y="436.5" width="57" height="35" fill="#00bfff" stroke="#000" stroke-width="1"/>
<path d="M1142.5 430.5L1148.5 436.5M1211.5 430.5L1205.5 436.5M1142.5 477.5L1148.5 471.5M1211.5 477.5L1205.5 471.5" stroke="#000" stroke-width="1"/>
<rect x="1142.5" y="478.5" width="69" height="149" fill="#fbcb63" stroke="#000" stroke-width="1"/>
<rect x="1148.5" y="484.5" width="57" height="137" fill="#00bfff" stroke="#000" stroke-width="1"/>
<path d="M1142.5 478.5L1148.5 484.5M1211.5 478.5L1205.5 484.5M1142.5 627.5L1148.5 621.5M1211.5 627.5L1205.5 621.5" stroke="#000" stroke-width="1"/>
<text x="1177.0" y="451.5" font-family="Liberation Sans" font-size="12" fill="#000" text-anchor="middle" transform="translate(1177.0 0) scale(0.87 1) translate(-1177.0 0)">FIXED</text>
<text x="1177.0" y="551.5" font-family="Liberation Sans" font-size="12" fill="#000" text-anchor="middle" transform="translate(1177.0 0) scale(0.87 1) translate(-1177.0 0)">FIXED</text>
<rect x="1212.5" y="430.5" width="69" height="47" fill="#fbcb63" stroke="#000" stroke-width="1"/>
<rect x="1218.5" y="436.5" width="57" height="35" fill="#00bfff" stroke="#000" stroke-width="1"/>
<path d="M1212.5 430.5L1218.5 436.5M1281.5 430.5L1275.5 436.5M1212.5 477.5L1218.5 471.5M1281.5 477.5L1275.5 471.5" stroke="#000" stroke-width="1"/>
<rect x="1212.5" y="478.5" width="69" height="149" fill="#fbcb63" stroke="#000" stroke-width="1"/>
<rect x="1218.5" y="484.5" width="57" height="137" fill="#00bfff" stroke="#000" stroke-width="1"/>
<path d="M1212.5 478.5L1218.5 484.5M1281.5 478.5L1275.5 484.5M1212.5 627.5L1218.5 621.5M1281.5 627.5L1275.5 621.5" stroke="#000" stroke-width="1"/>
<text x="1247.0" y="451.5" font-family="Liberation Sans" font-size="12" fill="#000" text-anchor="middle" transform="translate(1247.0 0) scale(0.87 1) translate(-1247.0 0)">FIXED</text>
<text x="1247.0" y="551.5" font-family="Liberation Sans" font-size="12" fill="#000" text-anchor="middle" transform="translate(1247.0 0) scale(0.87 1) translate(-1247.0 0)">FIXED</text>
<rect x="899.5" y="430.5" width="172" height="47" fill="#fbcb63" stroke="#000" stroke-width="1"/>
<rect x="905.5" y="436.5" width="160" height="35" fill="#00bfff" stroke="#000" stroke-width="1"/>
<path d="M899.5 430.5L905.5 436.5M1071.5 430.5L1065.5 436.5M899.5 477.5L905.5 471.5M1071.5 477.5L1065.5 471.5" stroke="#000" stroke-width="1"/>
<text x="985.5" y="451.5" font-family="Liberation Sans" font-size="12" fill="#000" text-anchor="middle" transform="translate(985.5 0) scale(0.87 1) translate(-985.5 0)">FIXED</text>
<rect x="899.5" y="478.5" width="172" height="149" fill="#fbcb63" stroke="#000" stroke-width="1"/>
<rect x="905.5" y="484.5" width="160" height="137" fill="none" stroke="#000" stroke-width="1"/>
<path d="M899.5 478.5L905.5 484.5M1071.5 478.5L1065.5 484.5M899.5 627.5L905.5 621.5M1071.5 627.5L1065.5 621.5" stroke="#000" stroke-width="1"/>
<rect x="905.5" y="484.5" width="77" height="137" fill="#fbcb63" stroke="#000" stroke-width="1"/>
<rect x="911.5" y="490.5" width="65" height="125" fill="#00bfff" stroke="#000" stroke-width="1"/>
<path d="M905.5 484.5L911.5 490.5M982.5 484.5L976.5 490.5M905.5 621.5L911.5 615.5M982.5 621.5L976.5 615.5" stroke="#000" stroke-width="1"/>
<rect x="989.5" y="484.5" width="76" height="137" fill="#fbcb63" stroke="#000" stroke-width="1"/>
<rect x="995.5" y="490.5" width="64" height="125" fill="#00bfff" stroke="#000" stroke-width="1"/>
<path d="M989.5 484.5L995.5 490.5M1065.5 484.5L1059.5 490.5M989.5 621.5L995.5 615.5M1065.5 621.5L1059.5 615.5" stroke="#000" stroke-width="1"/>
<rect x="982.5" y="485.5" width="7" height="135" fill="#fbcb63" stroke="#000" stroke-width="1"/>
<path d="M913 491L977 552M913 615L977 555" stroke="#000" stroke-width="1" stroke-dasharray="10 7"/>
<path d="M1059 491L996 552M1059 615L996 555" stroke="#000" stroke-width="1" stroke-dasharray="10 7"/>
<text x="945" y="553" font-family="Liberation Sans" font-size="12" fill="#000" text-anchor="middle" transform="translate(945 0) scale(0.87 1) translate(-945 0)">LDiSlv</text>
<text x="1027" y="553" font-family="Liberation Sans" font-size="12" fill="#000" text-anchor="middle" transform="translate(1027 0) scale(0.87 1) translate(-1027 0)">BDin</text>
<path d="M909 553L912 550.5H977L974 547.5L983 553L974 558.5L977 555.5H912Z" fill="#fbcb63" stroke="#000" stroke-width="1"/>
<path d="M989 553L998 547.5L995 550.5H1060L1063 553L1060 555.5H995L998 558.5Z" fill="#fbcb63" stroke="#000" stroke-width="1"/>
<path d="M989.5 538.5H993.5V545.5H1000.5V548.5H993.5V553.5H989.5Z" fill="#fff" stroke="#333" stroke-width="0.7"/>
<path d="M628 627.5H1304" stroke="#000" stroke-width="1"/>
<path d="M690.5 415.5H711.5M739.5 415.5H760.5" stroke="#ff0000" stroke-width="1"/>
<text x="725.5" y="420" font-family="Liberation Sans" font-size="12" fill="#800080" text-anchor="middle" transform="translate(725.5 0) scale(0.87 1) translate(-725.5 0)">883</text>
<path d="M760.5 415.5H781.0M809.0 415.5H829.5" stroke="#ff0000" stroke-width="1"/>
<text x="795.0" y="420" font-family="Liberation Sans" font-size="12" fill="#800080" text-anchor="middle" transform="translate(795.0 0) scale(0.87 1) translate(-795.0 0)">883</text>
<path d="M829.5 415.5H850.5M878.5 415.5H899.5" stroke="#ff0000" stroke-width="1"/>
<text x="864.5" y="420" font-family="Liberation Sans" font-size="12" fill="#800080" text-anchor="middle" transform="translate(864.5 0) scale(0.87 1) translate(-864.5 0)">883</text>
<path d="M899.5 415.5H925.5M959.5 415.5H985.5" stroke="#ff0000" stroke-width="1"/>
<text x="942.5" y="420" font-family="Liberation Sans" font-size="12" fill="#000" text-anchor="middle" transform="translate(942.5 0) scale(0.87 1) translate(-942.5 0)">1100</text>
<path d="M985.5 415.5H1011.5M1045.5 415.5H1071.5" stroke="#ff0000" stroke-width="1"/>
<text x="1028.5" y="420" font-family="Liberation Sans" font-size="12" fill="#000" text-anchor="middle" transform="translate(1028.5 0) scale(0.87 1) translate(-1028.5 0)">1100</text>
<path d="M1071.5 415.5H1093.0M1121.0 415.5H1142.5" stroke="#ff0000" stroke-width="1"/>
<text x="1107.0" y="420" font-family="Liberation Sans" font-size="12" fill="#800080" text-anchor="middle" transform="translate(1107.0 0) scale(0.87 1) translate(-1107.0 0)">883</text>
<path d="M1142.5 415.5H1163.0M1191.0 415.5H1211.5" stroke="#ff0000" stroke-width="1"/>
<text x="1177.0" y="420" font-family="Liberation Sans" font-size="12" fill="#800080" text-anchor="middle" transform="translate(1177.0 0) scale(0.87 1) translate(-1177.0 0)">884</text>
<path d="M1211.5 415.5H1232.5M1260.5 415.5H1281.5" stroke="#ff0000" stroke-width="1"/>
<text x="1246.5" y="420" font-family="Liberation Sans" font-size="12" fill="#800080" text-anchor="middle" transform="translate(1246.5 0) scale(0.87 1) translate(-1246.5 0)">884</text>
<path d="M690.5 408V423M693.5 412L690.5 415.5L693.5 419" stroke="#ff0000" stroke-width="1" fill="none"/>
<path d="M760.5 408V423M757.5 412L760.5 415.5L757.5 419M763.5 412L760.5 415.5L763.5 419" stroke="#ff0000" stroke-width="1" fill="none"/>
<path d="M829.5 408V423M826.5 412L829.5 415.5L826.5 419M832.5 412L829.5 415.5L832.5 419" stroke="#ff0000" stroke-width="1" fill="none"/>
<path d="M899.5 408V423M896.5 412L899.5 415.5L896.5 419M902.5 412L899.5 415.5L902.5 419" stroke="#ff0000" stroke-width="1" fill="none"/>
<path d="M985.5 408V423M982.5 412L985.5 415.5L982.5 419M988.5 412L985.5 415.5L988.5 419" stroke="#ff0000" stroke-width="1" fill="none"/>
<path d="M1071.5 408V423M1068.5 412L1071.5 415.5L1068.5 419M1074.5 412L1071.5 415.5L1074.5 419" stroke="#ff0000" stroke-width="1" fill="none"/>
<path d="M1142.5 408V423M1139.5 412L1142.5 415.5L1139.5 419M1145.5 412L1142.5 415.5L1145.5 419" stroke="#ff0000" stroke-width="1" fill="none"/>
<path d="M1211.5 408V423M1208.5 412L1211.5 415.5L1208.5 419M1214.5 412L1211.5 415.5L1214.5 419" stroke="#ff0000" stroke-width="1" fill="none"/>
<path d="M1281.5 408V423M1278.5 412L1281.5 415.5L1278.5 419" stroke="#ff0000" stroke-width="1" fill="none"/>
<path d="M668.5 430.5V447.0M668.5 461.0V477.5" stroke="#ff0000" stroke-width="1"/>
<text x="668.5" y="458.5" font-family="Liberation Sans" font-size="12" fill="#000" text-anchor="middle" transform="translate(668.5 0) scale(0.87 1) translate(-668.5 0)">600</text>
<path d="M668.5 477.5V508.5M668.5 522.5V553.5" stroke="#ff0000" stroke-width="1"/>
<text x="668.5" y="520.0" font-family="Liberation Sans" font-size="12" fill="#800000" text-anchor="middle" transform="translate(668.5 0) scale(0.87 1) translate(-668.5 0)">955</text>
<path d="M668.5 553.5V583.5M668.5 597.5V627.5" stroke="#ff0000" stroke-width="1"/>
<text x="668.5" y="595.0" font-family="Liberation Sans" font-size="12" fill="#800000" text-anchor="middle" transform="translate(668.5 0) scale(0.87 1) translate(-668.5 0)">945</text>
<path d="M663 430.5H676M665.5 433.5L668.5 430.5L671.5 433.5" stroke="#ff0000" stroke-width="1" fill="none"/>
<path d="M663 477.5H676M665.5 480.5L668.5 477.5L671.5 480.5M665.5 474.5L668.5 477.5L671.5 474.5" stroke="#ff0000" stroke-width="1" fill="none"/>
<path d="M663 553.5H676M665.5 556.5L668.5 553.5L671.5 556.5M665.5 550.5L668.5 553.5L671.5 550.5" stroke="#ff0000" stroke-width="1" fill="none"/>
<path d="M665.5 624.5L668.5 627.5L671.5 624.5" stroke="#ff0000" stroke-width="1" fill="none"/>
<text x="906" y="638" font-family="Liberation Sans" font-size="12" fill="#0000ff" transform="translate(906 0) scale(0.92 1) translate(-906 0)">Viewed from Outside</text>
<rect x="690.5" y="493.5" width="69" height="14" fill="#ffffe1" stroke="#a0a0a0" stroke-width="1"/>
<text x="694" y="505" font-family="Liberation Sans" font-size="12" fill="#000" text-anchor="start" transform="translate(694 0) scale(0.9 1) translate(-694 0)">OL072-2/GO</text>
<path d="M695.5 437.5V452L699 449L701.5 455L703.5 454L701 448H705.5Z" fill="#fff" stroke="#000" stroke-width="0.8"/>
</svg><div class="a" style="left:725px;top:133px;width:282px;height:236px;background:rgba(0,0,0,0.10);filter:blur(3px)"></div>
<div class="a" style="left:723px;top:130px;width:280px;height:235px;background:#f0f0f0;border:1px solid #2e86de"></div>
<div class="a" style="left:724px;top:131px;width:278px;height:30px;background:#fff"></div>
<div class="t" style="left:732px;top:140px;font-size:12px;color:#000">Dimension Types</div>
<svg class="a" style="left:981px;top:139px" width="12" height="12"><path d="M1 1L11 11M11 1L1 11" stroke="#111" stroke-width="1.1"/></svg>
<div class="a" style="left:732px;top:174px;width:258px;height:153px;background:#fff;border-top:1px solid #a0a0a0;border-left:1px solid #a0a0a0;border-right:1px solid #696969;border-bottom:1px solid #696969"></div>
<svg class="a" style="left:733px;top:175px" width="236" height="134">
<defs><pattern id="dots" width="2" height="2" patternUnits="userSpaceOnUse"><rect width="1" height="1" fill="#000"/></pattern><pattern id="cyd" width="2" height="2" patternUnits="userSpaceOnUse"><rect width="2" height="2" fill="#00ffff"/><rect width="1" height="1" fill="#fff"/><rect x="1" y="1" width="1" height="1" fill="#fff"/></pattern><pattern id="chk" width="2" height="2" patternUnits="userSpaceOnUse"><rect width="2" height="2" fill="#e8e8e8"/><rect width="1" height="1" fill="#c0c0c0"/><rect x="1" y="1" width="1" height="1" fill="#c0c0c0"/></pattern></defs>
<rect x="0" y="0" width="234" height="132" fill="#f0f0f0"/>
<g transform="translate(0 0)"><svg width="39" height="33">
<rect x="1" y="13" width="38" height="20" fill="url(#dots)"/><rect x="1" y="16" width="4" height="17" fill="url(#cyd)"/><rect x="12" y="16" width="4" height="17" fill="url(#cyd)"/><rect x="23" y="16" width="4" height="17" fill="url(#cyd)"/><rect x="35" y="16" width="4" height="17" fill="url(#cyd)"/><path d="M19.5 13V33" stroke="#ff00ff" stroke-dasharray="1 1"/><path d="M3 9.5H37" stroke="#ff0000" stroke-width="1" fill="none" stroke-dasharray="1 1"/><path d="M2 6.5L5 9.5L2 12.5M10 6.5L7 9.5L10 12.5" stroke="#ff0000" stroke-width="1" fill="none"/><path d="M27 6.5L30 9.5L27 12.5M35 6.5L32 9.5L35 12.5" stroke="#ff0000" stroke-width="1" fill="none"/>
</svg></g>
<g transform="translate(39 0)"><svg width="39" height="33">
</svg></g>
<g transform="translate(78 0)"><svg width="39" height="33">
<rect x="1" y="13" width="38" height="20" fill="url(#dots)"/><rect x="1" y="16" width="4" height="17" fill="url(#cyd)"/><rect x="12" y="16" width="4" height="17" fill="url(#cyd)"/><rect x="23" y="16" width="4" height="17" fill="url(#cyd)"/><rect x="35" y="16" width="4" height="17" fill="url(#cyd)"/><path d="M19.5 13V33" stroke="#ff00ff" stroke-dasharray="1 1"/><path d="M3 9.5H37" stroke="#ff0000" stroke-width="1" fill="none" stroke-dasharray="1 1"/><path d="M2 6.5L5 9.5L2 12.5M10 6.5L7 9.5L10 12.5" stroke="#ff0000" stroke-width="1" fill="none"/><path d="M14 6.5L17 9.5L14 12.5M22 6.5L19 9.5L22 12.5" stroke="#ff0000" stroke-width="1" fill="none"/><path d="M27 6.5L30 9.5L27 12.5M35 6.5L32 9.5L35 12.5" stroke="#ff0000" stroke-width="1" fill="none"/>
</svg></g>
<g transform="translate(117 0)"><svg width="39" height="33">
</svg></g>
<g transform="translate(156 0)"><svg width="39" height="33">
<path d="M2.5 33V4.5H8" stroke="#ff0000" stroke-width="1" fill="none" stroke-dasharray="1 1"/><path d="M8 2L10.5 4.5L8 7" stroke="#ff0000" stroke-width="1" fill="none"/><path d="M5.5 33V14.5H9" stroke="#ff0000" stroke-width="1" fill="none" stroke-dasharray="1 1"/><rect x="12" y="6" width="27" height="27" fill="url(#dots)"/><rect x="14" y="9" width="3" height="19" fill="url(#cyd)"/><rect x="24" y="9" width="3" height="19" fill="url(#cyd)"/><rect x="35" y="9" width="3" height="19" fill="url(#cyd)"/><path d="M20.5 6V33M14 17.5H21" stroke="#ff00ff" stroke-width="1" fill="none"/>
</svg></g>
<g transform="translate(195 0)"><svg width="39" height="33">
</svg></g>
<g transform="translate(0 33)"><svg width="39" height="33">
<rect x="1" y="13" width="38" height="20" fill="url(#dots)"/><rect x="1" y="16" width="4" height="17" fill="url(#cyd)"/><rect x="12" y="16" width="4" height="17" fill="url(#cyd)"/><rect x="23" y="16" width="4" height="17" fill="url(#cyd)"/><rect x="35" y="16" width="4" height="17" fill="url(#cyd)"/><path d="M19.5 13V33" stroke="#ff00ff" stroke-dasharray="1 1"/><path d="M3 9.5H37" stroke="#ff0000" stroke-width="1" fill="none" stroke-dasharray="1 1"/><path d="M2 6.5L5 9.5L2 12.5M10 6.5L7 9.5L10 12.5" stroke="#ff0000" stroke-width="1" fill="none"/><path d="M27 6.5L30 9.5L27 12.5M35 6.5L32 9.5L35 12.5" stroke="#ff0000" stroke-width="1" fill="none"/>
</svg></g>
<g transform="translate(39 33)"><svg width="39" height="33">
<path d="M5 3.5H11M5 29.5H11" stroke="#0000ff" stroke-width="1.5" fill="none"/><path d="M8 4.5V28.5" stroke="#ff0000" stroke-width="1.5" fill="none"/><path d="M5 7.5L8 4.0L11 7.5ZM5 25.5L8 29.0L11 25.5Z" fill="#ff0000"/><rect x="14.5" y="2.5" width="25" height="34" fill="#fff" stroke="#000" stroke-width="1.3"/><rect x="20.5" y="8.5" width="19" height="15" fill="#f0f0f0" stroke="#000" stroke-width="1.3"/><path d="M20 30.5H39" stroke="#000" stroke-width="1.3" fill="none"/><path d="M14 3.5H24M14 29.5H24" stroke="#0000ff" stroke-width="1" fill="none" stroke-dasharray="1 1"/>
</svg></g>
<g transform="translate(78 33)"><svg width="39" height="33">
<path d="M5 3.5H11M5 29.5H11" stroke="#0000ff" stroke-width="1.5" fill="none"/><path d="M8 4.5V28.5" stroke="#ff0000" stroke-width="1.5" fill="none"/><path d="M5 7.5L8 4.0L11 7.5ZM5 25.5L8 29.0L11 25.5Z" fill="#ff0000"/><rect x="14.5" y="2.5" width="25" height="34" fill="#fff" stroke="#000" stroke-width="1.3"/><rect x="20.5" y="8.5" width="19" height="15" fill="#f0f0f0" stroke="#000" stroke-width="1.3"/><path d="M20 30.5H39" stroke="#000" stroke-width="1.3" fill="none"/><path d="M14 3.5H24M14 29.5H24" stroke="#0000ff" stroke-width="1" fill="none" stroke-dasharray="1 1"/>
</svg></g>
<g transform="translate(117 33)"><svg width="39" height="33">
<path d="M5 3.5H11M5 29.5H11" stroke="#0000ff" stroke-width="1.5" fill="none"/><path d="M8 4.5V28.5" stroke="#ff0000" stroke-width="1.5" fill="none"/><path d="M5 7.5L8 4.0L11 7.5ZM5 25.5L8 29.0L11 25.5Z" fill="#ff0000"/><rect x="14.5" y="2.5" width="25" height="34" fill="#fff" stroke="#000" stroke-width="1.3"/><rect x="20.5" y="8.5" width="19" height="15" fill="#f0f0f0" stroke="#000" stroke-width="1.3"/><path d="M20 30.5H39" stroke="#000" stroke-width="1.3" fill="none"/><path d="M14 3.5H24M14 29.5H24" stroke="#0000ff" stroke-width="1" fill="none" stroke-dasharray="1 1"/>
</svg></g>
<g transform="translate(156 33)"><svg width="39" height="33">
<path d="M5.5 33V16.5H11" stroke="#ff0000" stroke-width="1" fill="none" stroke-dasharray="1 1"/><path d="M11 14L13.5 16.5L11 19L8.5 16.5Z" stroke="#ff0000" stroke-width="1" fill="none"/><path d="M17.5 2V33M23.5 2V12.5H38M23.5 33V22.5H38" stroke="#000" stroke-width="1" fill="none" stroke-dasharray="1 1"/><path d="M14 16.5H21" stroke="#0000ff" stroke-width="1" fill="none" stroke-dasharray="1 1"/>
</svg></g>
<g transform="translate(195 33)"><svg width="39" height="33">
<path d="M5.5 33V16.5H11" stroke="#ff0000" stroke-width="1" fill="none" stroke-dasharray="1 1"/><path d="M11 14L13.5 16.5L11 19L8.5 16.5Z" stroke="#ff0000" stroke-width="1" fill="none"/><path d="M17.5 2V33M23.5 2V12.5H38M23.5 33V22.5H38" stroke="#000" stroke-width="1" fill="none" stroke-dasharray="1 1"/><path d="M14 16.5H21" stroke="#0000ff" stroke-width="1" fill="none" stroke-dasharray="1 1"/>
</svg></g>
<g transform="translate(0 66)"><svg width="39" height="33">
<path d="M5 7.5H11M5 25.5H11" stroke="#0000ff" stroke-width="1.5" fill="none"/><path d="M8 8.5V24.5" stroke="#ff0000" stroke-width="1.5" fill="none"/><path d="M5 11.5L8 8.0L11 11.5ZM5 21.5L8 25.0L11 21.5Z" fill="#ff0000"/><rect x="14.5" y="2.5" width="25" height="34" fill="#fff" stroke="#000" stroke-width="1.3"/><rect x="20.5" y="8.5" width="19" height="15" fill="#f0f0f0" stroke="#000" stroke-width="1.3"/><path d="M20 30.5H39" stroke="#000" stroke-width="1.3" fill="none"/><path d="M14 7.5H24M14 25.5H24" stroke="#0000ff" stroke-width="1" fill="none" stroke-dasharray="1 1"/>
</svg></g>
<g transform="translate(39 66)"><svg width="39" height="33">
<path d="M4 9.5H20M4 23.5H20" stroke="#0000ff" stroke-width="1.2" fill="none" stroke-dasharray="1 3"/><path d="M6.5 11V22" stroke="#ff0000" stroke-width="1" fill="none" stroke-dasharray="1 1"/><path d="M4.5 11L6.5 9.5L8.5 11M4.5 22L6.5 23.5L8.5 22" stroke="#ff0000" stroke-width="1" fill="none"/><path d="M21 2V33" stroke="#000" stroke-width="1.2" fill="none"/><path d="M23 9.5H38M26 16.5H38M23 23.5H38" stroke="#808080" stroke-width="1" fill="none" stroke-dasharray="1 1"/>
</svg></g>
<g transform="translate(78 66)"><svg width="39" height="33">
<path d="M6.5 8V24" stroke="#ff0000" stroke-width="1" fill="none" stroke-dasharray="1 1"/><path d="M4.5 11L6.5 8.5L8.5 11M4.5 21L6.5 23.5L8.5 21" stroke="#ff0000" stroke-width="1" fill="none"/><path d="M4 5.5H10M4 25.5H14" stroke="#0000ff" stroke-width="1" fill="none" stroke-dasharray="1 1"/><path d="M12.5 33V2.5H39M16.5 33V8.5H39M16.5 27.5H39M20 29.5H39" stroke="#000" stroke-width="1" fill="none" stroke-dasharray="1 1"/><rect x="18" y="10" width="21" height="15" fill="#eee"/><path d="M18.5 25V10.5H39M18.5 24.5H39" stroke="#000" stroke-width="1" fill="none" stroke-dasharray="1 1"/>
</svg></g>
<g transform="translate(117 66)"><svg width="39" height="33">
<path d="M5.5 33V16.5H11" stroke="#ff0000" stroke-width="1" fill="none" stroke-dasharray="1 1"/><path d="M11 14L13.5 16.5L11 19L8.5 16.5Z" stroke="#ff0000" stroke-width="1" fill="none"/><path d="M17.5 2V33M23.5 2V12.5H38M23.5 33V22.5H38" stroke="#000" stroke-width="1" fill="none" stroke-dasharray="1 1"/><path d="M14 16.5H21" stroke="#0000ff" stroke-width="1" fill="none" stroke-dasharray="1 1"/>
</svg></g>
<g transform="translate(156 66)"><svg width="39" height="33">
<path d="M9.5 33V8" stroke="#ff0000" stroke-width="1" fill="none" stroke-dasharray="1 1"/><path d="M7 11L9.5 8.5L12 11" stroke="#ff0000" stroke-width="1" fill="none"/><path d="M14.5 33V16" stroke="#ff0000" stroke-width="1" fill="none" stroke-dasharray="1 1"/><path d="M5 8.5H39M14 13.5H39" stroke="#008000" stroke-width="1" fill="none" stroke-dasharray="1 3"/>
</svg></g>
<g transform="translate(195 66)"><svg width="39" height="33">
<path d="M5 3.5H39" stroke="#888" stroke-width="1" fill="none"/><path d="M9.5 4V22M14.5 4V17" stroke="#ff0000" stroke-width="1.5" fill="none"/><path d="M7 19L9.5 23L12 19M12 14L14.5 18L17 14" stroke="#ff0000" stroke-width="1.2" fill="none"/><path d="M16 19.5H39M5 24.5H39" stroke="#008000" stroke-width="1.5" fill="none" stroke-dasharray="3 2"/>
</svg></g>
<g transform="translate(0 99)"><svg width="39" height="33">
<path d="M5 7.5H11M5 25.5H11" stroke="#0000ff" stroke-width="1.5" fill="none"/><path d="M8 8.5V24.5" stroke="#ff0000" stroke-width="1.5" fill="none"/><path d="M5 11.5L8 8.0L11 11.5ZM5 21.5L8 25.0L11 21.5Z" fill="#ff0000"/><rect x="14.5" y="2.5" width="25" height="34" fill="#fff" stroke="#000" stroke-width="1.3"/><rect x="20.5" y="8.5" width="19" height="15" fill="url(#cyd)" stroke="#000" stroke-width="1.3"/><path d="M26 20L33 13M29 21L35 15" stroke="#0000c0" stroke-width="1.3" fill="none"/><path d="M20 30.5H39" stroke="#000" stroke-width="1.3" fill="none"/><path d="M14 7.5H24M14 25.5H24" stroke="#0000ff" stroke-width="1" fill="none" stroke-dasharray="1 1"/>
</svg></g>
<g transform="translate(39 99)"><svg width="39" height="33">
<path d="M10.5 33V2.5H39M16.5 33V8.5H39" stroke="#000" stroke-width="1" fill="none" stroke-dasharray="1 1"/><path d="M6.5 8V24" stroke="#ff0000" stroke-width="1" fill="none" stroke-dasharray="1 1"/><path d="M4.5 11L6.5 8.5L8.5 11" stroke="#ff0000" stroke-width="1" fill="none"/><path d="M3 7.5H11M3 25.5H11" stroke="#0000ff" stroke-width="1" fill="none" stroke-dasharray="1 1"/><rect x="17" y="12" width="22" height="4" fill="url(#cyd)"/><rect x="17" y="20" width="22" height="4" fill="url(#cyd)"/><path d="M17 11.5H39M17 16.5H39M17 19.5H39M17 24.5H39" stroke="#0000ff" stroke-width="1" fill="none" stroke-dasharray="1 1"/>
</svg></g>
<g transform="translate(78 99)"><svg width="39" height="33">
<path d="M10.5 33V2.5H39M16.5 33V8.5H39" stroke="#000" stroke-width="1" fill="none" stroke-dasharray="1 1"/><path d="M6.5 8V24" stroke="#ff0000" stroke-width="1" fill="none" stroke-dasharray="1 1"/><path d="M4.5 11L6.5 8.5L8.5 11" stroke="#ff0000" stroke-width="1" fill="none"/><path d="M3 7.5H11M3 25.5H11" stroke="#0000ff" stroke-width="1" fill="none" stroke-dasharray="1 1"/><rect x="17" y="12" width="22" height="4" fill="url(#cyd)"/><rect x="17" y="20" width="22" height="4" fill="url(#cyd)"/><path d="M17 11.5H39M17 16.5H39M17 19.5H39M17 24.5H39" stroke="#0000ff" stroke-width="1" fill="none" stroke-dasharray="1 1"/>
</svg></g>
<g transform="translate(117 99)"><svg width="39" height="33">
<path d="M12.5 33V2.5H39M18.5 33V8.5H39" stroke="#000" stroke-width="1" fill="none" stroke-dasharray="1 1"/><path d="M4.5 33V13.5H9" stroke="#ff0000" stroke-width="1" fill="none" stroke-dasharray="1 1"/><path d="M9 11L11.5 13.5L9 16L6.5 13.5Z" stroke="#ff0000" stroke-width="1" fill="none"/><rect x="19" y="12" width="20" height="4" fill="url(#cyd)"/><rect x="19" y="22" width="20" height="4" fill="url(#cyd)"/><path d="M19 11.5H39M19 16.5H39M19 21.5H39M19 26.5H39" stroke="#0000ff" stroke-width="1" fill="none" stroke-dasharray="1 1"/>
</svg></g>
<g transform="translate(156 99)"><svg width="39" height="33">
<path d="M12.5 33V2.5H39M18.5 33V8.5H39" stroke="#000" stroke-width="1" fill="none" stroke-dasharray="1 1"/><path d="M4.5 33V13.5H9" stroke="#ff0000" stroke-width="1" fill="none" stroke-dasharray="1 1"/><path d="M9 11L11.5 13.5L9 16L6.5 13.5Z" stroke="#ff0000" stroke-width="1" fill="none"/><rect x="19" y="12" width="20" height="4" fill="url(#cyd)"/><rect x="19" y="22" width="20" height="4" fill="url(#cyd)"/><path d="M19 11.5H39M19 16.5H39M19 21.5H39M19 26.5H39" stroke="#0000ff" stroke-width="1" fill="none" stroke-dasharray="1 1"/>
</svg></g>
<g transform="translate(195 99)"><svg width="39" height="33">
<path d="M12.5 33V2.5H39M18.5 33V8.5H39" stroke="#000" stroke-width="1" fill="none" stroke-dasharray="1 1"/><path d="M4.5 33V13.5H9" stroke="#ff0000" stroke-width="1" fill="none" stroke-dasharray="1 1"/><path d="M9 11L11.5 13.5L9 16L6.5 13.5Z" stroke="#ff0000" stroke-width="1" fill="none"/><rect x="19" y="12" width="20" height="4" fill="url(#cyd)"/><rect x="19" y="22" width="20" height="4" fill="url(#cyd)"/><path d="M19 11.5H39M19 16.5H39M19 21.5H39M19 26.5H39" stroke="#0000ff" stroke-width="1" fill="none" stroke-dasharray="1 1"/>
</svg></g>
<rect x="0" y="0" width="2" height="132" fill="#000"/>
<rect x="38" y="0" width="1.6" height="132" fill="#000"/>
<rect x="77" y="0" width="1.6" height="132" fill="#000"/>
<rect x="116" y="0" width="1.6" height="132" fill="#000"/>
<rect x="155" y="0" width="1.6" height="132" fill="#000"/>
<rect x="194" y="0" width="1.6" height="132" fill="#000"/>
<rect x="0" y="0" width="234" height="2" fill="#000"/>
<rect x="0" y="32" width="234" height="1.6" fill="#000"/>
<rect x="0" y="65" width="234" height="1.6" fill="#000"/>
<rect x="0" y="98" width="234" height="1.6" fill="#000"/>
</svg>
<div class="btn" style="left:732px;top:336px;width:60px;height:19px"></div>
<div class="t" style="left:748.5px;top:338.84px;font-size:12px;transform:scaleX(0.95);transform-origin:0 0"><u>C</u>lose</div><div class="a" style="left:1185px;top:133px;width:124px;height:162px;background:rgba(0,0,0,0.10);filter:blur(3px)"></div>
<div class="a" style="left:1183px;top:130px;width:122px;height:161px;background:#f0f0f0;border:1px solid #2e86de"></div>
<div class="a" style="left:1184px;top:131px;width:120px;height:25px;background:#fff"></div>
<div class="t" style="left:1187px;top:138px;font-size:11.5px;color:#000">Features</div>
<svg class="a" style="left:1283px;top:137px" width="12" height="12"><path d="M1 1L11 11M11 1L1 11" stroke="#111" stroke-width="1.1"/></svg>
<svg width="0" height="0" style="position:absolute"><defs><pattern id="dots2" width="2" height="2" patternUnits="userSpaceOnUse"><rect width="1" height="1" fill="#000"/></pattern><pattern id="cyd" width="2" height="2" patternUnits="userSpaceOnUse"><rect width="2" height="2" fill="#00ffff"/><rect width="1" height="1" fill="#fff"/><rect x="1" y="1" width="1" height="1" fill="#fff"/></pattern><pattern id="chk" width="2" height="2" patternUnits="userSpaceOnUse"><rect width="2" height="2" fill="#e8e8e8"/><rect width="1" height="1" fill="#c0c0c0"/><rect x="1" y="1" width="1" height="1" fill="#c0c0c0"/></pattern></defs></svg>
<div class="fb" style="left:1184px;top:156px"></div><svg class="a" style="left:1185px;top:157px" width="21" height="19"><path d="M5 6V12M16 6V12M5 9H16" stroke="#000" stroke-width="2.5"/><text x="14" y="18" font-size="8" font-weight="bold" fill="#900" font-family="Liberation Sans">A</text></svg>
<div class="fb" style="left:1208px;top:156px"></div><svg class="a" style="left:1209px;top:157px" width="21" height="19"><path d="M5 6V12M16 6V12M5 9H16" stroke="#000" stroke-width="2.5"/><text x="14" y="18" font-size="8" font-weight="bold" fill="#900" font-family="Liberation Sans">B</text></svg>
<div class="fb" style="left:1232px;top:156px"></div><svg class="a" style="left:1233px;top:157px" width="21" height="19"><path d="M6 3H13M6 15H13M9.5 3V15" stroke="#000" stroke-width="2.5"/><text x="13" y="18" font-size="8" font-weight="bold" fill="#900" font-family="Liberation Sans">A</text></svg>
<div class="fb" style="left:1256px;top:156px"></div><svg class="a" style="left:1257px;top:157px" width="21" height="19"><path d="M6 3H13M6 15H13M9.5 3V15" stroke="#000" stroke-width="2.5"/><text x="13" y="18" font-size="8" font-weight="bold" fill="#900" font-family="Liberation Sans">B</text></svg>
<div class="fb" style="left:1280px;top:156px"></div><svg class="a" style="left:1281px;top:157px" width="21" height="19"><rect x="1" y="1" width="18" height="16" fill="url(#chk)"/><path d="M4 9.5H17" stroke="#f00" stroke-dasharray="1 3"/></svg>
<div class="fb" style="left:1184px;top:178px"></div><svg class="a" style="left:1185px;top:179px" width="21" height="19"><rect x="4.5" y="7.5" width="12" height="4" fill="#fff" stroke="#000"/></svg>
<div class="fb" style="left:1208px;top:178px"></div><svg class="a" style="left:1209px;top:179px" width="21" height="19"><rect x="3.5" y="8.5" width="14" height="2" fill="#fff" stroke="#000"/></svg>
<div class="fb" style="left:1232px;top:178px"></div><svg class="a" style="left:1233px;top:179px" width="21" height="19"><rect x="4.5" y="6.5" width="12" height="6" fill="#fff" stroke="#000"/></svg>
<div class="fb" style="left:1256px;top:178px"></div><svg class="a" style="left:1257px;top:179px" width="21" height="19"><rect x="1" y="1" width="18" height="16" fill="url(#chk)"/><rect x="3.5" y="5.5" width="13" height="8" rx="2" fill="none" stroke="#000" stroke-dasharray="1 1"/></svg>
<div class="fb" style="left:1184px;top:199px"></div><svg class="a" style="left:1185px;top:200px" width="21" height="19"><rect x="8.5" y="3.5" width="4" height="12" fill="#fff" stroke="#000"/></svg>
<div class="fb" style="left:1208px;top:199px"></div><svg class="a" style="left:1209px;top:200px" width="21" height="19"><rect x="9.5" y="3.5" width="2" height="13" fill="#fff" stroke="#000"/></svg>
<div class="fb" style="left:1232px;top:199px"></div><svg class="a" style="left:1233px;top:200px" width="21" height="19"><rect x="7.5" y="3.5" width="6" height="12" fill="#fff" stroke="#000"/></svg>
<div class="fb" style="left:1184px;top:221px"></div><svg class="a" style="left:1185px;top:222px" width="21" height="19"><path d="M3 8.5H15M12 11L12 17" stroke="#008000" stroke-dasharray="2 2"/><path d="M12 10V17M10 12L12 10L14 12M10 15L12 17L14 15" stroke="#008000" fill="none"/></svg>
<div class="fb" style="left:1208px;top:221px"></div><svg class="a" style="left:1209px;top:222px" width="21" height="19"><path d="M3 6.5H12M3 9.5H10" stroke="#008000" stroke-dasharray="2 2"/><path d="M11 9V17M16 7V17M9 11L11 9L13 11M9 15L11 17L13 15M14 9L16 7L18 9M14 15L16 17L18 15" stroke="#008000" fill="none"/></svg>
<div class="fb" style="left:1232px;top:221px"></div><svg class="a" style="left:1233px;top:222px" width="21" height="19"><path d="M3 11.5H14" stroke="#008000" stroke-dasharray="2 2"/><path d="M10 3V11M8 5L10 3L12 5M8 9L10 11L12 9" stroke="#008000" fill="none"/></svg>
<div class="fb" style="left:1256px;top:221px"></div><svg class="a" style="left:1257px;top:222px" width="21" height="19"><path d="M3 11.5H12M3 14.5H16" stroke="#008000" stroke-dasharray="2 2"/><path d="M11 3V11M16 3V13M9 5L11 3L13 5M9 9L11 11L13 9M14 5L16 3L18 5M14 11L16 13L18 11" stroke="#008000" fill="none"/></svg>
<div class="fb" style="left:1184px;top:243px"></div><svg class="a" style="left:1185px;top:244px" width="21" height="19"><rect x="2" y="2" width="17" height="15" fill="#70dede"/><rect x="3" y="7" width="15" height="5" fill="#fff"/><path d="M3 7.5H18M3 11.5H18" stroke="#000" stroke-dasharray="1 1"/></svg>
<div class="fb" style="left:1208px;top:243px"></div><svg class="a" style="left:1209px;top:244px" width="21" height="19"><rect x="2" y="2" width="17" height="15" fill="#70dede"/><path d="M3 9.5H18" stroke="#000" stroke-width="2" stroke-dasharray="1 1"/></svg>
<div class="fb" style="left:1232px;top:243px"></div><svg class="a" style="left:1233px;top:244px" width="21" height="19"><rect x="2" y="2" width="17" height="15" fill="#70dede"/><rect x="3" y="6" width="15" height="7" fill="#e8e8e8"/><path d="M3 6.5H18M3 12.5H18" stroke="#000" stroke-dasharray="1 1"/></svg>
<div class="fb" style="left:1256px;top:243px"></div><svg class="a" style="left:1257px;top:244px" width="21" height="19"><rect x="2" y="2" width="17" height="15" fill="#70dede"/><path d="M3 9.5H18" stroke="#a000a0" stroke-width="3" stroke-dasharray="1 1"/></svg>
<div class="fb" style="left:1280px;top:243px"></div><svg class="a" style="left:1281px;top:244px" width="21" height="19"><rect x="1" y="1" width="18" height="16" fill="url(#chk)"/><rect x="9" y="4" width="9" height="11" fill="#70dede"/><path d="M9 4.5H18M9 9.5H18M9 14.5H18M17.5 4V15" stroke="#000" stroke-dasharray="1 1"/><path d="M3 9.5H9M5 7L3 9.5L5 12" stroke="#080" stroke-dasharray="1 1" fill="none"/></svg>
<div class="fb" style="left:1184px;top:265px"></div><svg class="a" style="left:1185px;top:266px" width="21" height="19"><rect x="2" y="2" width="17" height="15" fill="#70dede"/><rect x="8" y="3" width="5" height="13" fill="#fff"/><path d="M8.5 3V16M12.5 3V16" stroke="#000" stroke-dasharray="1 1"/></svg>
<div class="fb" style="left:1208px;top:265px"></div><svg class="a" style="left:1209px;top:266px" width="21" height="19"><rect x="2" y="2" width="17" height="15" fill="#70dede"/><path d="M10.5 3V16" stroke="#000" stroke-width="2" stroke-dasharray="1 1"/></svg>
<div class="fb" style="left:1232px;top:265px"></div><svg class="a" style="left:1233px;top:266px" width="21" height="19"><rect x="2" y="2" width="17" height="15" fill="#70dede"/><rect x="7" y="3" width="7" height="13" fill="#e8e8e8"/><path d="M7.5 3V16M13.5 3V16" stroke="#000" stroke-dasharray="1 1"/></svg>
<div class="fb" style="left:1256px;top:265px"></div><svg class="a" style="left:1257px;top:266px" width="21" height="19"><rect x="2" y="2" width="17" height="15" fill="#70dede"/><path d="M10.5 3V16" stroke="#a000a0" stroke-width="3" stroke-dasharray="1 1"/></svg>
</body></html>
